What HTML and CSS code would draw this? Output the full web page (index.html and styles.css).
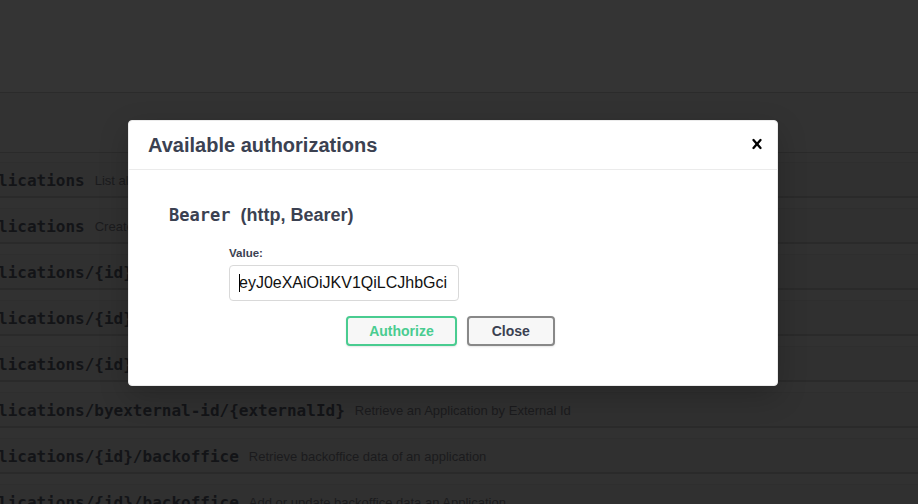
FILE: index.html
```html
<!DOCTYPE html>
<html lang="en">
<head>
<meta charset="utf-8">
<title>Swagger UI - Available authorizations</title>
<link rel="stylesheet" href="styles.css">
</head>
<body>
<div class="page">
  <div class="topbar"></div>
  <div class="tag"></div>
  <div class="ops">
    <div class="op"><span class="path">lications</span><span class="desc">List all Applications</span></div>
    <div class="op"><span class="path">lications</span><span class="desc">Create an Application</span></div>
    <div class="op"><span class="path">lications/{id}</span><span class="desc">Retrieve an Application</span></div>
    <div class="op"><span class="path">lications/{id}</span><span class="desc">Update an Application</span></div>
    <div class="op"><span class="path">lications/{id}</span><span class="desc">Delete an Application</span></div>
    <div class="op"><span class="path">lications/byexternal-id/{externalId}</span><span class="desc">Retrieve an Application by External Id</span></div>
    <div class="op"><span class="path">lications/{id}/backoffice</span><span class="desc">Retrieve backoffice data of an application</span></div>
    <div class="op"><span class="path">lications/{id}/backoffice</span><span class="desc">Add or update backoffice data an Application</span></div>
  </div>
</div>

<div class="modal">
  <div class="modal-header">
    <h3 class="modal-title">Available authorizations</h3>
    <button class="close-btn" aria-label="Close">
      <svg width="20" height="20" viewBox="0 0 20 20"><path d="M14.348 14.849a1.2 1.2 0 0 1-1.697 0L10 11.819l-2.651 3.029a1.2 1.2 0 1 1-1.697-1.697l2.758-3.15-2.759-3.152a1.2 1.2 0 1 1 1.697-1.697L10 8.183l2.651-3.031a1.2 1.2 0 1 1 1.697 1.697l-2.758 3.152 2.758 3.15a1.2 1.2 0 0 1 0 1.698z" fill="#000"/></svg>
    </button>
  </div>
  <div class="modal-content">
    <div class="auth-container">
      <h4 class="auth-title"><code class="auth-code">Bearer</code>&nbsp; (http, Bearer)</h4>
      <div class="field">
        <label class="field-label">Value:</label>
        <div class="input"><span class="caret"></span>eyJ0eXAiOiJKV1QiLCJhbGci</div>
      </div>
      <div class="btn-wrapper">
        <button class="btn btn-authorize">Authorize</button>
        <button class="btn btn-close">Close</button>
      </div>
    </div>
  </div>
</div>
</body>
</html>
```

FILE: styles.css
```css
* { box-sizing: border-box; }

html, body {
  margin: 0;
  padding: 0;
  width: 918px;
  height: 504px;
  overflow: hidden;
  background: #323232;
  font-family: "Liberation Sans", Arial, sans-serif;
}

.page {
  width: 918px;
}

.topbar {
  height: 93px;
  background: #343434;
  border-bottom: 1px solid #2b2b2b;
}

.tag {
  height: 60px;
  background: #323232;
  border-bottom: 1px solid #2a2a2a;
}

.ops {
  padding-top: 9px;
  background: #313131;
}

.op {
  height: 36px;
  margin-bottom: 10px;
  padding-top: 2px;
  display: flex;
  align-items: center;
  background: #303030;
  border-top: 1px solid #2e2e2e;
  border-bottom: 2px solid #2a2a2a;
  white-space: nowrap;
  overflow: hidden;
}

.path {
  margin-left: -2px;
  font-family: "DejaVu Sans Mono", monospace;
  font-weight: 700;
  font-size: 16px;
  color: #131417;
}

.desc {
  padding-left: 10px;
  font-size: 13px;
  color: #1b1b1d;
}

.modal {
  position: absolute;
  left: 128px;
  top: 120px;
  width: 650px;
  height: 266px;
  background: #fff;
  border: 1px solid #ebebeb;
  border-radius: 4px;
  box-shadow: 0 10px 30px 0 rgba(0, 0, 0, 0.2);
}

.modal-header {
  display: flex;
  align-items: center;
  height: 49px;
  border-bottom: 1px solid #ebebeb;
}

.modal-title {
  flex: 1;
  margin: 0;
  padding: 0 19px;
  font-size: 20px;
  line-height: 24px;
  font-weight: 700;
  color: #3b4151;
}

.close-btn {
  width: 20px;
  height: 20px;
  padding: 0;
  margin: -2px 10px 0 0;
  border: none;
  background: none;
  display: flex;
}

.modal-content {
  padding: 20px;
}

.auth-container {
  padding: 10px 20px;
}

.auth-title {
  margin: 5px 0 0;
  font-size: 18px;
  line-height: 20px;
  font-weight: 700;
  color: #3b4151;
}

.auth-code {
  font-family: "DejaVu Sans Mono", monospace;
  font-weight: 700;
  font-size: 17px;
}

.field {
  margin: 21px 0 0 60px;
}

.field-label {
  display: block;
  font-size: 11.5px;
  line-height: 14px;
  font-weight: 700;
  color: #3b4151;
}

.input {
  margin-top: 5px;
  width: 230px;
  height: 36px;
  padding: 0 9px;
  border: 1px solid #d9d9d9;
  border-radius: 4px;
  background: #fff;
  font-size: 16px;
  line-height: 34px;
  color: #111;
  white-space: nowrap;
  overflow: hidden;
}

.caret {
  display: inline-block;
  width: 0;
  height: 18px;
  vertical-align: middle;
  border-left: 1px solid #000;
  margin-right: -1px;
  position: relative;
  top: -1px;
}

.btn-wrapper {
  display: flex;
  justify-content: center;
  gap: 10px;
  margin-top: 15px;
  padding-right: 5px;
}

.btn {
  height: 30px;
  padding: 5px 23px;
  border: 2px solid #888;
  border-radius: 4px;
  background: #f7f7f7;
  font-family: "Liberation Sans", Arial, sans-serif;
  font-size: 14px;
  line-height: 16px;
  font-weight: 700;
  color: #3b4151;
  box-shadow: 0 1px 2px rgba(0, 0, 0, 0.1);
}

.btn-authorize {
  border-color: #49cc90;
  color: #49cc90;
  padding: 5px 21px;
}
```
